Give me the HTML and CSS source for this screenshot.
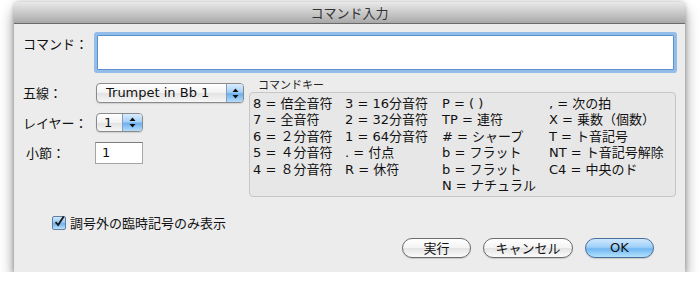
FILE: index.html
```html
<!DOCTYPE html>
<html lang="ja">
<head>
    <meta charset="UTF-8">
    <title>コマンド入力</title>
    <link rel="stylesheet" href="styles.css">
</head>
<body>
    <div class="window">
        <div class="titlebar">コマンド入力</div>
        <div class="content">
            <div class="cmd-row">
                <span class="cmd-label">コマンド：</span>
                <div class="text-field focused"></div>
            </div>
            <div class="main">
                <div class="settings">
                    <div class="field-row">
                        <span class="label">五線：</span>
                        <div class="popup staff">
                            <span class="popup-text">Trumpet in Bb 1</span>
                            <span class="popup-arrows">
                                <svg width="7" height="11" viewBox="0 0 7 11"><path d="M3.5 0.5 L6.5 4 L0.5 4 Z M0.5 7 L6.5 7 L3.5 10.5 Z" fill="#111"/></svg>
                            </span>
                        </div>
                    </div>
                    <div class="field-row">
                        <span class="label">レイヤー：</span>
                        <div class="popup layer">
                            <span class="popup-text">1</span>
                            <span class="popup-arrows">
                                <svg width="7" height="11" viewBox="0 0 7 11"><path d="M3.5 0.5 L6.5 4 L0.5 4 Z M0.5 7 L6.5 7 L3.5 10.5 Z" fill="#111"/></svg>
                            </span>
                        </div>
                    </div>
                    <div class="field-row">
                        <span class="label indent">小節：</span>
                        <div class="small-field">1</div>
                    </div>
                </div>
                <div class="group">
                    <div class="group-title">コマンドキー</div>
                    <div class="group-box">
                        <ul class="key-col c1">
                            <li>8 = 倍全音符</li>
                            <li>7 = 全音符</li>
                            <li>6 = ２分音符</li>
                            <li>5 = ４分音符</li>
                            <li>4 = ８分音符</li>
                        </ul>
                        <ul class="key-col c2">
                            <li>3 = 16分音符</li>
                            <li>2 = 32分音符</li>
                            <li>1 = 64分音符</li>
                            <li>. = 付点</li>
                            <li>R = 休符</li>
                        </ul>
                        <ul class="key-col c3">
                            <li>P = ( )</li>
                            <li>TP = 連符</li>
                            <li># = シャープ</li>
                            <li>b = フラット</li>
                            <li>b = フラット</li>
                            <li>N = ナチュラル</li>
                        </ul>
                        <ul class="key-col c4">
                            <li>, = 次の拍</li>
                            <li>X = 乗数（個数）</li>
                            <li>T = ト音記号</li>
                            <li>NT = ト音記号解除</li>
                            <li>C4 = 中央のド</li>
                        </ul>
                    </div>
                </div>
            </div>
            <div class="check-row">
                <span class="checkbox">
                    <svg width="14" height="14" viewBox="0 0 14 14"><path d="M3 7 L6 10.5 L12.5 0.5" fill="none" stroke="#1a1a1a" stroke-width="2.2"/></svg>
                </span>
                <span class="check-label">調号外の臨時記号のみ表示</span>
            </div>
            <div class="buttons">
                <div class="button">実行</div>
                <div class="button cancel">キャンセル</div>
                <div class="button default">OK</div>
            </div>
        </div>
    </div>
</body>
</html>
```

FILE: styles.css
```css
* {
    margin: 0;
    padding: 0;
    box-sizing: border-box;
}
body {
    background: #fff;
    font-family: "DejaVu Sans", "Noto Sans CJK JP", sans-serif;
    font-size: 13px;
    color: #111;
}
.window {
    width: 671px;
    height: 270px;
    margin: 2px 0 0 14px;
    background: #ececec;
    border-radius: 5px 5px 0 0;
    box-shadow: 0 8px 14px rgba(0, 0, 0, 0.45), 0 0 4px rgba(0, 0, 0, 0.25);
    display: flex;
    flex-direction: column;
}
.titlebar {
    height: 22px;
    line-height: 21px;
    text-align: center;
    color: #333;
    font-family: "Noto Sans CJK JP", sans-serif;
    background: linear-gradient(#e9e9e9, #c4c4c4 60%, #a8a8a8);
    border-bottom: 1px solid #6a6a6a;
    border-radius: 5px 5px 0 0;
}
.content {
    padding: 11px 8px 0 9px;
}
.cmd-row {
    display: flex;
    align-items: flex-start;
}
.cmd-label {
    width: 74px;
    line-height: 18px;
    font-family: "Noto Sans CJK JP", sans-serif;
}
.text-field {
    width: 577px;
    height: 35px;
    background: #fff;
    border: 1px solid #5e8fcf;
    box-shadow: 0 0 0 3px #92bde9;
    border-radius: 1px;
}
.main {
    display: flex;
    margin-top: 13px;
}
.settings {
    width: 226px;
    display: flex;
    flex-direction: column;
    gap: 10px;
}
.field-row {
    display: flex;
    align-items: center;
}
.label {
    width: 73px;
    font-family: "Noto Sans CJK JP", sans-serif;
    line-height: 18px;
}
.label.indent {
    padding-left: 3px;
}
.popup {
    display: flex;
    height: 20px;
    border: 1px solid #8a8a8a;
    border-radius: 4px;
    background: linear-gradient(#ffffff, #f2f2f2 50%, #e2e2e2 51%, #f6f6f6);
    overflow: hidden;
    box-shadow: 0 1px 1px rgba(0, 0, 0, 0.12);
}
.popup.staff {
    width: 148px;
}
.popup.layer {
    width: 47px;
    height: 19px;
}
.popup-text {
    flex: 1;
    padding-left: 9px;
    line-height: 18px;
}
.layer .popup-text {
    padding-left: 7px;
}
.popup-arrows {
    width: 17px;
    display: flex;
    align-items: center;
    justify-content: center;
    border-left: 1px solid #7f9fc4;
    background: linear-gradient(#d9ecfd, #a8d0f6 45%, #6db0ef 55%, #b5dcfa);
}
.layer .popup-arrows {
    width: 20px;
}
.small-field {
    margin-left: -1px;
    width: 48px;
    height: 22px;
    background: #fff;
    border: 1px solid #a5a5a5;
    border-top-color: #7c7c7c;
    padding-left: 6px;
    line-height: 20px;
}
.group {
    margin-top: -6px;
}
.group-title {
    font-family: "Noto Sans CJK JP", sans-serif;
    font-size: 11px;
    line-height: 14px;
    padding-left: 9px;
    color: #222;
}
.group-box {
    margin-top: 1px;
    width: 427px;
    height: 105px;
    border: 1px solid #c6c6c6;
    border-radius: 4px;
    background: #e7e7e7;
    display: flex;
    padding: 3px 0 0 3px;
}
.key-col {
    list-style: none;
    line-height: 16.4px;
    white-space: nowrap;
}
.c1 { width: 92px; }
.c2 { width: 97px; }
.c3 { width: 107px; }
.check-row {
    display: flex;
    align-items: center;
    gap: 4px;
    margin: 18px 0 0 29px;
    line-height: 16px;
}
.checkbox {
    width: 14px;
    height: 14px;
    border: 1px solid #5f7fa6;
    border-radius: 2px;
    background: linear-gradient(#d4e9fc, #8fc4f3 50%, #6aaeec 55%, #bfe1fb);
    display: flex;
}
.checkbox svg {
    margin: -2px 0 0 0;
}
.check-label {
    font-family: "Noto Sans CJK JP", sans-serif;
}
.buttons {
    display: flex;
    justify-content: flex-end;
    gap: 12px;
    margin-top: 7px;
    padding-right: 23px;
}
.button {
    width: 69px;
    height: 20px;
    line-height: 18px;
    text-align: center;
    border: 1px solid #6b6b6b;
    border-radius: 10px;
    background: linear-gradient(#ffffff, #f3f3f3 50%, #e4e4e4 52%, #fbfbfb);
    font-family: "Noto Sans CJK JP", sans-serif;
    box-shadow: 0 1px 1px rgba(0, 0, 0, 0.15);
}
.button.cancel {
    width: 90px;
}
.button.default {
    border-color: #4b6f9c;
    background: linear-gradient(#cfe7fc, #9fd0f8 45%, #70b7f2 55%, #b3e1fd);
    font-family: "DejaVu Sans", sans-serif;
}
```
